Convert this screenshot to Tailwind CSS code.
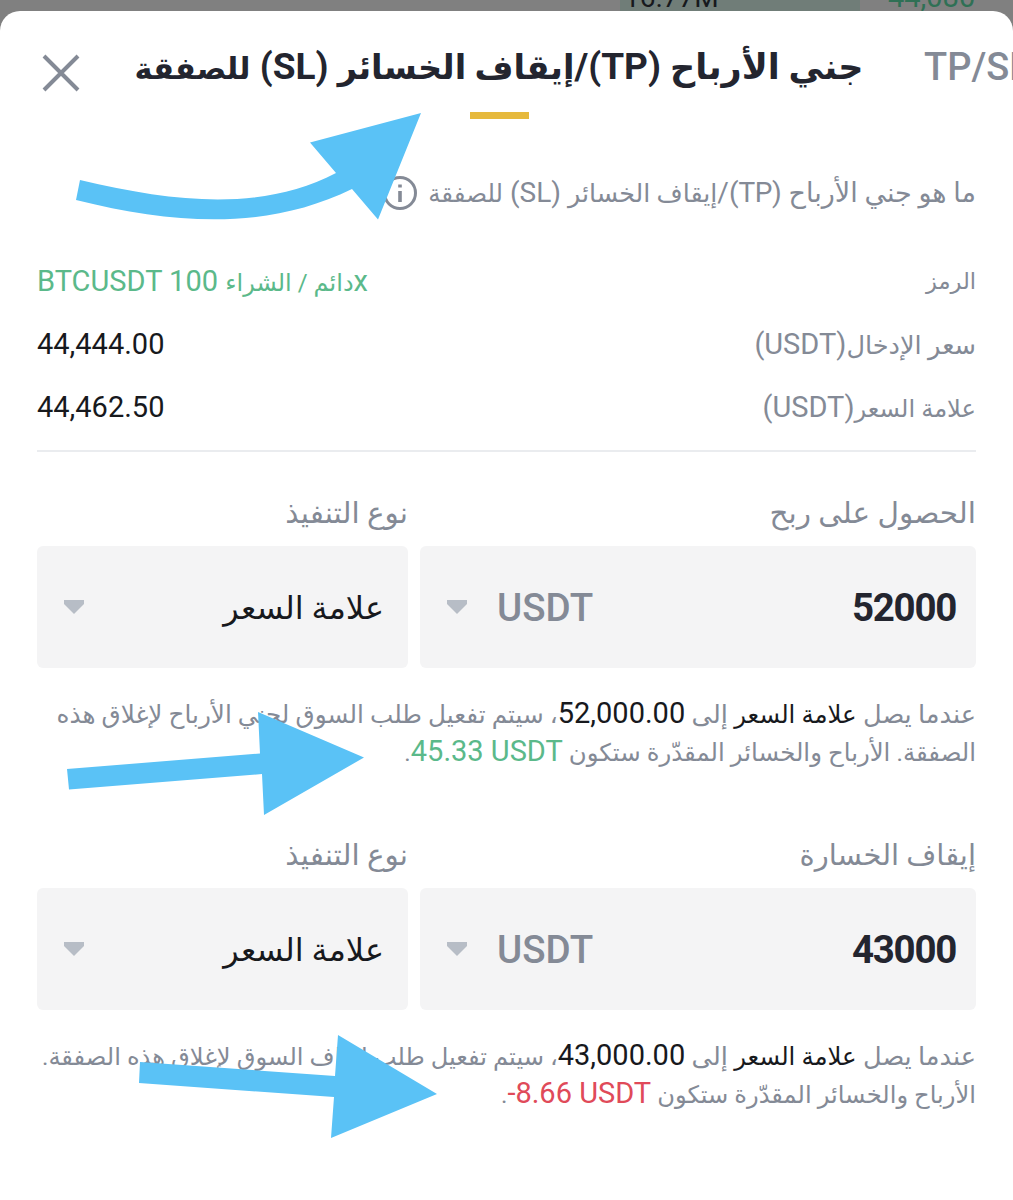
<!DOCTYPE html>
<html lang="ar" dir="rtl">
<head>
<meta charset="utf-8">
<title>TP/SL</title>
<script src="https://cdn.jsdelivr.net/npm/@tailwindcss/browser@4"></script>
</head>
<body class="h-[1200px] overflow-hidden bg-[#808080] font-[Roboto,'DejaVu_Sans',sans-serif] text-[29px] text-[#848a96]">
<div class="relative h-[1200px] overflow-hidden">
  <div class="flex h-[11px] items-end justify-end" dir="ltr">
    <div class="flex h-[11px] w-[240px] items-end bg-[#707d78] pl-1 text-[28px] leading-[26px] text-[#17191d]">16.77M</div>
    <div class="flex h-[11px] w-[153px] items-end pl-7 text-[29px] leading-[28px] text-[#2f7055]">44,080</div>
  </div>
  <main class="relative h-[1189px] rounded-t-[20px] bg-white">
    <header class="relative flex h-[109px] overflow-hidden pt-[30px] leading-[52px]" dir="ltr">
      <svg class="ml-[42px] mt-[13px] size-[38px] shrink-0" viewBox="0 0 38 38" fill="none" stroke="#848a96" stroke-width="4"><path d="M2 2 36 36M36 2 2 36"/></svg>
      <div class="ml-[54px] flex w-[730px] shrink-0 flex-col items-center">
        <h1 class="h-[52px] whitespace-nowrap text-[37px] font-bold text-[#23252f]" dir="rtl"><span class="text-[35px]">جني الأرباح</span> (TP)/<span class="text-[33.6px]">إيقاف الخسائر</span> (SL) <span class="text-[30.4px]">للصفقة</span></h1>
        <div class="mt-[19px] h-[7px] w-[59px] bg-[#e6b93c]"></div>
      </div>
      <div class="ml-[60px] whitespace-nowrap text-[38px] font-medium">TP/SL</div>
    </header>
    <section class="px-[37px]">
      <div class="flex h-[96px] items-end gap-[11px] leading-[44px]"><span class="whitespace-nowrap text-[28px]"><span class="text-[27px]">ما هو جني الأرباح</span> <span class="tracking-[-0.5px]">(TP)/</span><span class="text-[25.3px]">إيقاف الخسائر</span> (SL) <span class="text-[24.5px]">للصفقة</span></span>
        <svg class="mb-[6px] size-[34px]" viewBox="0 0 34 34" fill="none" stroke="#848a96"><circle cx="17" cy="17" r="15.5" stroke-width="3"/><path d="M17 15v11M17 8.5v3" stroke-width="3.6"/></svg>
      </div>
      <dl class="mt-[34px] grid h-[200px] auto-rows-[63px] leading-[63px]">
        <div class="flex justify-between"><dt class="text-[22.5px]">الرمز</dt><dd class="text-[#5bb98a]" dir="ltr">BTCUSDT <span dir="rtl"><span class="text-[24px]">دائم / الشراء</span> 100</span>x</dd></div>
        <div class="flex justify-between"><dt><span class="text-[25.6px]">سعر الإدخال</span>(USDT)</dt><dd class="text-[#17191d]">44,444.00</dd></div>
        <div class="flex justify-between"><dt><span class="text-[24.2px]">علامة السعر</span>(USDT)</dt><dd class="text-[#17191d]">44,462.50</dd></div>
      </dl>
      <div class="h-[2px] bg-[#eaecef]"></div>
      <div class="h-[342px]">
        <div class="grid grid-cols-[556px_371px] gap-3 pt-[37px] text-[29.5px] leading-[48px]"><span>الحصول على ربح</span><span>نوع التنفيذ</span></div>
        <div class="mt-[9px] grid h-[122px] grid-cols-[556px_371px] gap-3 text-[38.5px] font-medium">
          <div class="flex items-center rounded-md bg-[#f4f4f5] pt-[2px] pr-[20px] pl-[27px]"><span class="font-bold tracking-[-1.3px] text-[#23252f]">52000</span><span class="mr-auto">USDT</span><svg class="mr-[30px] mb-[2px] h-[14px] w-[20px]" viewBox="0 0 20 14" fill="#b7bdc6"><path d="M0 0H20V4L10 14 0 4Z"/></svg></div>
          <div class="flex items-center rounded-md bg-[#f4f4f5] pt-[2px] pr-[24px] pl-[27px]"><span class="text-[32px] text-[#17191d]">علامة السعر</span><svg class="mr-auto mb-[2px] h-[14px] w-[20px]" viewBox="0 0 20 14" fill="#b7bdc6"><path d="M0 0H20V4L10 14 0 4Z"/></svg></div>
        </div>
        <p class="mt-[27px] whitespace-nowrap text-[25.6px] leading-[38px]">عندما يصل <span class="text-[24.4px] leading-none text-[#17191d]">علامة السعر</span> إلى <span class="text-[29px] leading-none text-[#17191d]">52,000.00</span><span class="text-[24.7px] leading-none">، سيتم تفعيل طلب السوق لجني الأرباح لإغلاق هذه</span><br><span class="text-[24.4px] leading-none">الصفقة. الأرباح والخسائر المقدّرة ستكون <bdi class="text-[29px] text-[#5bb98a]">45.33 USDT</bdi>.</span></p>
      </div>
      <div>
        <div class="grid grid-cols-[556px_371px] gap-3 pt-[37px] text-[29.5px] leading-[48px]"><span class="text-[29px]">إيقاف الخسارة</span><span>نوع التنفيذ</span></div>
        <div class="mt-[9px] grid h-[122px] grid-cols-[556px_371px] gap-3 text-[38.5px] font-medium">
          <div class="flex items-center rounded-md bg-[#f4f4f5] pt-[2px] pr-[20px] pl-[27px]"><span class="font-bold tracking-[-1.3px] text-[#23252f]">43000</span><span class="mr-auto">USDT</span><svg class="mr-[30px] mb-[2px] h-[14px] w-[20px]" viewBox="0 0 20 14" fill="#b7bdc6"><path d="M0 0H20V4L10 14 0 4Z"/></svg></div>
          <div class="flex items-center rounded-md bg-[#f4f4f5] pt-[2px] pr-[24px] pl-[27px]"><span class="text-[32px] text-[#17191d]">علامة السعر</span><svg class="mr-auto mb-[2px] h-[14px] w-[20px]" viewBox="0 0 20 14" fill="#b7bdc6"><path d="M0 0H20V4L10 14 0 4Z"/></svg></div>
        </div>
        <p class="mt-[27px] whitespace-nowrap text-[25.6px] leading-[38px]">عندما يصل <span class="text-[24.4px] leading-none text-[#17191d]">علامة السعر</span> إلى <span class="text-[29px] leading-none text-[#17191d]">43,000.00</span><span class="text-[24.2px] leading-none">، سيتم تفعيل طلب إيقاف السوق لإغلاق هذه الصفقة.</span><br><span class="text-[24.2px] leading-none">الأرباح والخسائر المقدّرة ستكون <bdi class="text-[29px] text-[#e04a59]" dir="ltr">-8.66 USDT</bdi>.</span></p>
      </div>
    </section>
  </main>
  <svg class="absolute inset-0 h-[1200px] w-[1013px]" viewBox="0 0 1013 1200" fill="#5ac2f6">
    <path d="M80 180C180 204 265 210 336 173L310 142.5 421 113 378 219.5 352 189C270 229 180 226 76 200Z"/>
    <path d="M67 769 260 753.5 258 712 364 757.5 264 815 262 774 69 789.5Z"/>
    <path d="M140 1062 335 1076 338 1035 437 1094 331 1138 334 1097 139 1083Z"/>
  </svg>
</div>
</body>
</html>
